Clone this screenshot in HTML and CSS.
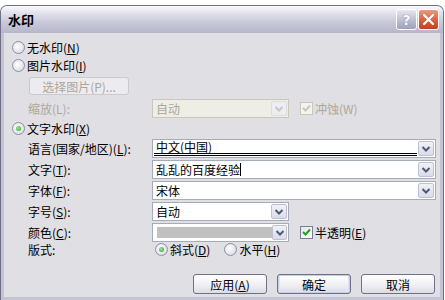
FILE: index.html
```html
<!DOCTYPE html>
<html lang="zh-CN">
<head>
  <meta charset="UTF-8">
  <title>水印</title>
  <link rel="stylesheet" href="styles.css">
</head>
<body>
  <div class="window">
    <div class="titlebar">
      <span class="title">水印</span>
      <div class="caption">
        <span class="cap-btn help">?</span>
        <span class="cap-btn close">
          <svg width="13" height="13" viewBox="0 0 13 13"><path d="M2 2 L11 11 M11 2 L2 11" stroke="#fff" stroke-width="2.2" stroke-linecap="round"/></svg>
        </span>
      </div>
    </div>

    <div class="dialog">
      <div class="opt"><span class="radio"></span>无水印(<u>N</u>)</div>
      <div class="opt"><span class="radio"></span>图片水印(<u>I</u>)</div>
      <div class="pick-row"><span class="pick">选择图片(P)...</span></div>
      <div class="field scale">
        <span class="disabled">缩放(L):</span>
        <div class="inline">
          <div class="combo short off">
            <span class="value">自动</span>
            <span class="drop"><svg width="10" height="6" viewBox="0 0 10 6"><path d="M1.5 1 L5 4.5 L8.5 1" fill="none" stroke="#c5c6cc" stroke-width="2"/></svg></span>
          </div>
          <span class="check off"><svg width="9" height="9" viewBox="0 0 9 9"><path d="M1 4 L3.5 6.5 L8 1.5" fill="none" stroke="#c8c7bf" stroke-width="2"/></svg></span>
          <span class="disabled">冲蚀(W)</span>
        </div>
      </div>
      <div class="opt text-wm"><span class="radio on"></span>文字水印(<u>X</u>)</div>

      <div class="form">
        <span>语言(国家/地区)(<u>L</u>):</span>
        <div class="combo">
          <span class="value lang">中文(中国)</span>
          <span class="drop"><svg width="10" height="6" viewBox="0 0 10 6"><path d="M1.5 1 L5 4.5 L8.5 1" fill="none" stroke="#4d5a78" stroke-width="2"/></svg></span>
        </div>

        <span>文字(<u>T</u>):</span>
        <div class="combo">
          <span class="value">乱乱的百度经验<i class="caret"></i></span>
          <span class="drop"><svg width="10" height="6" viewBox="0 0 10 6"><path d="M1.5 1 L5 4.5 L8.5 1" fill="none" stroke="#4d5a78" stroke-width="2"/></svg></span>
        </div>

        <span>字体(<u>F</u>):</span>
        <div class="combo">
          <span class="value">宋体</span>
          <span class="drop"><svg width="10" height="6" viewBox="0 0 10 6"><path d="M1.5 1 L5 4.5 L8.5 1" fill="none" stroke="#4d5a78" stroke-width="2"/></svg></span>
        </div>

        <span>字号(<u>S</u>):</span>
        <div class="combo short">
          <span class="value">自动</span>
          <span class="drop"><svg width="10" height="6" viewBox="0 0 10 6"><path d="M1.5 1 L5 4.5 L8.5 1" fill="none" stroke="#4d5a78" stroke-width="2"/></svg></span>
        </div>

        <span>颜色(<u>C</u>):</span>
        <div class="inline">
          <div class="combo short">
            <span class="value"><i class="swatch"></i></span>
            <span class="drop"><svg width="10" height="6" viewBox="0 0 10 6"><path d="M1.5 1 L5 4.5 L8.5 1" fill="none" stroke="#4d5a78" stroke-width="2"/></svg></span>
          </div>
          <span class="check"><svg width="9" height="9" viewBox="0 0 9 9"><path d="M1 4 L3.5 6.5 L8 1.5" fill="none" stroke="#21a121" stroke-width="2"/></svg></span>
          <span>半透明(<u>E</u>)</span>
        </div>

        <span>版式:</span>
        <div class="inline radios">
          <span class="radio on"></span><span class="rlabel">斜式(<u>D</u>)</span>
          <span class="radio"></span><span>水平(<u>H</u>)</span>
        </div>
      </div>

      <div class="footer">
        <span class="btn">应用(<u>A</u>)</span>
        <span class="btn default">确定</span>
        <span class="btn">取消</span>
      </div>
    </div>
  </div>
</body>
</html>
```

FILE: styles.css
```css
* {
  box-sizing: border-box;
}

body {
  margin: 0;
  width: 445px;
  height: 300px;
  overflow: hidden;
  background-color: #fff;
  font-family: "Noto Sans CJK SC", "Noto Sans", sans-serif;
  font-size: 12px;
  color: #000;
}

u {
  text-decoration: underline;
}

.window {
  margin-top: 5px;
  width: 444px;
  height: 295px;
  border: 1px solid #6f6f88;
  border-bottom: none;
  border-radius: 7px 7px 0 0;
  background-color: #c3c3d3;
  display: flex;
  flex-direction: column;
}

/* title bar */
.titlebar {
  height: 27px;
  padding: 0 4px 0 7px;
  display: flex;
  align-items: center;
  justify-content: space-between;
  border-radius: 6px 6px 0 0;
  background: linear-gradient(#fafafc, #e3e3ec 25%, #c8c8d9 60%, #b7b7cc);
}

.title {
  font-size: 13px;
  font-weight: bold;
}

.caption {
  display: flex;
  gap: 1px;
}

.cap-btn {
  width: 21px;
  height: 21px;
  border: 1px solid #fff;
  border-radius: 3px;
  display: flex;
  align-items: center;
  justify-content: center;
}

.help {
  background: linear-gradient(#e6e6ee, #b9bace 60%, #9fa0bb);
  color: #fff;
  font-family: "DejaVu Sans", sans-serif;
  font-weight: bold;
  font-size: 14px;
  text-shadow: 0 0 1px #55576f;
}

.close {
  background: linear-gradient(#eb9a80, #d95f3d 55%, #c4401f);
}

/* dialog body */
.dialog {
  flex: 1;
  margin: 0 3px 3px;
  padding: 5px 5px 0 8px;
  background-color: #e0dfe3;
}

.opt {
  height: 18px;
  display: flex;
  align-items: center;
}

.opt.text-wm {
  height: 21px;
}

.radio {
  width: 13px;
  height: 13px;
  margin-right: 2px;
  border: 1px solid #8d8fa6;
  border-radius: 50%;
  background: radial-gradient(circle at 40% 40%, #fff, #e4e4ea 60%, #c9cad6);
  display: inline-flex;
  align-items: center;
  justify-content: center;
  flex-shrink: 0;
}

.radio.on::after {
  content: "";
  width: 5px;
  height: 5px;
  border-radius: 50%;
  background: radial-gradient(circle at 40% 40%, #9be39b, #2ba42b);
}

.pick-row {
  margin: 3px 0 0 17px;
}

.pick {
  width: 100px;
  height: 18px;
  border: 1px solid #cbcad1;
  border-radius: 3px;
  background-color: #ecebf0;
  color: #aca899;
  display: flex;
  align-items: center;
  justify-content: center;
}

.disabled {
  color: #aca899;
}

.field {
  display: grid;
  grid-template-columns: 124px auto;
  align-items: center;
  margin-left: 16px;
}

.field.scale {
  margin-top: 4px;
  height: 19px;
}

.form {
  display: grid;
  grid-template-columns: 124px 284px;
  grid-template-rows: repeat(5, 19px) 11px;
  row-gap: 2px;
  align-items: center;
  margin-left: 16px;
}

.inline {
  display: flex;
  align-items: center;
}

/* combo boxes */
.combo {
  height: 19px;
  padding: 1px;
  border: 1px solid #a5acb9;
  background-color: #fff;
  display: flex;
  align-items: center;
}

.combo.short {
  width: 137px;
}

.combo .value {
  flex: 1;
  height: 15px;
  padding-left: 2px;
  line-height: 14px;
  display: flex;
  align-items: center;
}

.combo .value.lang {
  border-bottom: 3px double #000;
  line-height: 12px;
  margin-right: 1px;
}

.caret {
  width: 1px;
  height: 13px;
  background-color: #000;
}

.swatch {
  width: 115px;
  height: 11px;
  margin-left: 1px;
  background-color: #c0c0c0;
}

.drop {
  width: 16px;
  height: 15px;
  border: 1px solid #bcc0d1;
  border-radius: 2px;
  background: linear-gradient(#f1f2f7, #d9dce7);
  display: flex;
  align-items: center;
  justify-content: center;
}

.combo.off {
  border-color: #c9c7ba;
  background-color: #eeede6;
  color: #aca899;
}

.combo.off .drop {
  border-color: #dcdce2;
  background: #eeeef2;
}

/* check boxes */
.check {
  width: 13px;
  height: 13px;
  margin: 0 2px 0 11px;
  border: 1px solid #7a7e98;
  background: linear-gradient(135deg, #e4e4ea, #fff);
  display: flex;
  align-items: center;
  justify-content: center;
}

.check.off {
  border-color: #cac8bb;
  background: #f4f3ee;
}

.radios .radio {
  margin-left: 3px;
}

.rlabel {
  margin-right: 11px;
}

/* buttons */
.footer {
  margin-top: 19px;
  display: flex;
  justify-content: flex-end;
  gap: 10px;
}

.btn {
  width: 74px;
  height: 20px;
  border: 1px solid #6f7089;
  border-radius: 3px;
  background: linear-gradient(#ffffff, #f1f1f5 50%, #dcdce4);
  display: flex;
  align-items: center;
  justify-content: center;
}

.btn.default {
  box-shadow: inset 0 0 0 1px #c4cfe6, inset 0 -1px 0 2px #dde3f1;
}
```
